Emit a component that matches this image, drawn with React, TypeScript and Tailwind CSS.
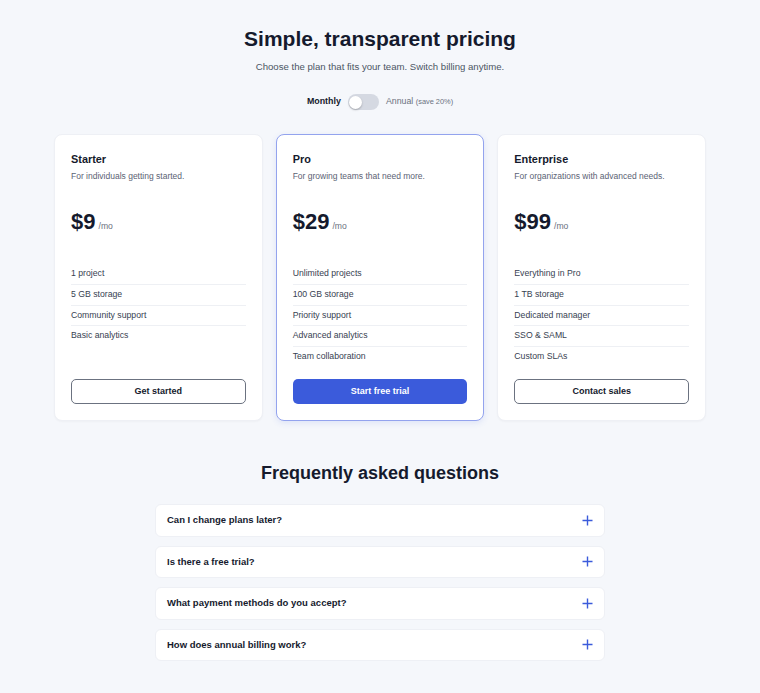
import { useState } from 'react';

type Plan = {
  name: string;
  blurb: string;
  price: number;
  features: string[];
  cta: string;
  featured?: boolean;
};

const plans: Plan[] = [
  {
    name: 'Starter',
    blurb: 'For individuals getting started.',
    price: 9,
    features: ['1 project', '5 GB storage', 'Community support', 'Basic analytics'],
    cta: 'Get started',
  },
  {
    name: 'Pro',
    blurb: 'For growing teams that need more.',
    price: 29,
    features: [
      'Unlimited projects',
      '100 GB storage',
      'Priority support',
      'Advanced analytics',
      'Team collaboration',
    ],
    cta: 'Start free trial',
    featured: true,
  },
  {
    name: 'Enterprise',
    blurb: 'For organizations with advanced needs.',
    price: 99,
    features: ['Everything in Pro', '1 TB storage', 'Dedicated manager', 'SSO & SAML', 'Custom SLAs'],
    cta: 'Contact sales',
  },
];

const faqs = [
  'Can I change plans later?',
  'Is there a free trial?',
  'What payment methods do you accept?',
  'How does annual billing work?',
];

function PlusIcon() {
  return (
    <svg width="11" height="11" viewBox="0 0 11 11" fill="none">
      <path d="M5.5 0.5v10M0.5 5.5h10" stroke="#3b5bdb" strokeWidth="1.4" />
    </svg>
  );
}

export default function App() {
  // Billing toggle: false = monthly
  const [annual, setAnnual] = useState(false);
  const [open, setOpen] = useState<number | null>(null);

  return (
    <div
      className="min-h-screen bg-[#f5f7fb] px-[54px] pt-[27px] pb-[32px] text-[#151a2d]"
      style={{ fontFamily: '"Liberation Sans", Arial, sans-serif' }}
    >
      {/* Header */}
      <div className="flex flex-col items-center">
        <h1 className="text-[21px] leading-[24px] font-bold">Simple, transparent pricing</h1>
        <p className="mt-[9px] text-[9.6px] leading-[14px] text-[#4b5563]">
          Choose the plan that fits your team. Switch billing anytime.
        </p>
        <div className="mt-[20px] flex h-[16px] items-center gap-[7px]">
          <span className="text-[8.9px] font-bold text-[#151a2d]">Monthly</span>
          <button
            onClick={() => setAnnual(!annual)}
            className="flex h-[16px] w-[31px] items-center rounded-full bg-[#d5d9e2] px-[1.5px]"
          >
            <span
              className={
                'h-[13px] w-[13px] rounded-full bg-white shadow-[0_1px_2px_rgba(0,0,0,0.25)] ' +
                (annual ? 'ml-auto' : '')
              }
            />
          </button>
          <span className="text-[8.8px] text-[#6b7280]">
            Annual <span className="text-[7.4px]">(save 20%)</span>
          </span>
        </div>
      </div>

      {/* Plans */}
      <div className="mt-[24px] grid grid-cols-3 gap-[13px]">
        {plans.map((plan) => (
          <div
            key={plan.name}
            className={
              plan.featured
                ? 'flex h-[287px] flex-col rounded-[8px] border border-[#93a3ee] bg-white px-[16px] pt-[16px] pb-[16px] shadow-[0_2px_6px_rgba(59,91,219,0.12)]'
                : 'flex h-[287px] flex-col rounded-[8px] border border-[#eef0f5] bg-white px-[16px] pt-[16px] pb-[16px] shadow-[0_1px_2px_rgba(15,23,42,0.03)]'
            }
          >
            <h2 className="text-[10.9px] leading-[16px] font-bold">{plan.name}</h2>
            <p className="mt-[3px] text-[8.5px] leading-[12px] text-[#5b6274]">{plan.blurb}</p>
            <div className="mt-[26px] flex items-baseline gap-[3px]">
              <span className="text-[22px] leading-[28px] font-bold">${annual ? Math.round(plan.price * 0.8) : plan.price}</span>
              <span className="text-[8.6px] text-[#6b7280]">/mo</span>
            </div>
            <ul className="mt-[28px] flex-1">
              {plan.features.map((f, i) => (
                <li
                  key={f}
                  className={
                    'text-[8.7px] leading-[19.75px] text-[#374151] ' +
                    (i < plan.features.length - 1 ? 'border-b border-[#eef0f4]' : '')
                  }
                >
                  {f}
                </li>
              ))}
            </ul>
            <button
              className={
                plan.featured
                  ? 'h-[25px] w-full rounded-[5px] bg-[#3b5bdb] text-[9px] font-bold text-white'
                  : 'h-[25px] w-full rounded-[5px] border border-[#6b7280] bg-white text-[9px] font-bold text-[#151a2d]'
              }
            >
              {plan.cta}
            </button>
          </div>
        ))}
      </div>

      {/* FAQ */}
      <h2 className="mt-[41px] text-center text-[18px] leading-[22px] font-bold">Frequently asked questions</h2>
      <div className="mx-auto mt-[20px] flex w-[450px] flex-col gap-[9px]">
        {faqs.map((q, i) => (
          <button
            key={q}
            onClick={() => setOpen(open === i ? null : i)}
            className="flex h-[32.5px] items-center justify-between rounded-[6px] border border-[#eef0f5] bg-white pr-[11px] pl-[11px] text-left"
          >
            <span className="text-[9.5px] font-bold text-[#151a2d]">{q}</span>
            <PlusIcon />
          </button>
        ))}
      </div>
    </div>
  );
}
